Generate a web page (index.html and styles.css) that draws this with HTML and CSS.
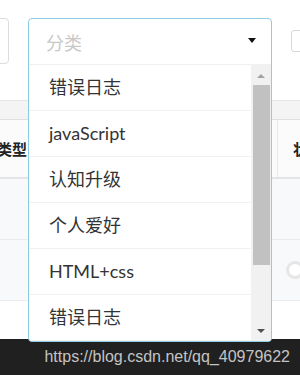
FILE: index.html
```html
<!DOCTYPE html>
<html lang="zh-CN">
<head>
  <meta charset="UTF-8" />
  <meta name="viewport" content="width=device-width, initial-scale=1" />
  <title>分类筛选</title>
  <link rel="stylesheet" href="styles.css">
</head>
<body>
  <div class="page">
    <!-- Filter bar -->
    <div class="filters">
      <div class="input"></div>
      <div class="select-wrap">
        <div class="select">
          <div class="select-head">
            <span class="placeholder">分类</span>
            <span class="caret"></span>
          </div>
          <div class="select-body">
            <ul class="options">
              <li>错误日志</li>
              <li>javaScript</li>
              <li>认知升级</li>
              <li>个人爱好</li>
              <li>HTML+css</li>
              <li>错误日志</li>
            </ul>
            <div class="scrollbar">
              <span class="arrow up"></span>
              <span class="thumb"></span>
              <span class="arrow down"></span>
            </div>
          </div>
        </div>
      </div>
      <div class="check"></div>
    </div>

    <!-- Table -->
    <div class="table">
      <div class="table-top"></div>
      <div class="thead">
        <div class="th first"><span>类型</span></div>
        <div class="th">状态</div>
      </div>
      <div class="row">
        <div class="td"></div>
        <div class="td"></div>
      </div>
      <div class="row">
        <div class="td"></div>
        <div class="td"><span class="radio"></span></div>
      </div>
    </div>

    <div class="watermark">https://blog.csdn.net/qq_40979622</div>
  </div>
</body>
</html>
```

FILE: styles.css
```css
body {
  margin: 0;
  padding: 0;
  background: #fff;
  font-family: Lato, "Noto Sans CJK SC", sans-serif;
  color: #333;
}

.page {
  height: 375px;
  display: flex;
  flex-direction: column;
  overflow: hidden;
}

/* filter bar */
.filters {
  display: flex;
  align-items: flex-start;
  gap: 19px;
  padding-top: 18px;
  height: 46px;
  margin-bottom: 36px;
}

.input {
  width: 120px;
  height: 44px;
  margin-left: -113px;
  border: 1px solid #dcdcdc;
  border-radius: 4px;
  flex-shrink: 0;
}

.select-wrap {
  position: relative;
  width: 244px;
  height: 46px;
  flex-shrink: 0;
  z-index: 5;
}

.select {
  position: absolute;
  top: 0;
  left: 0;
  width: 242px;
  height: 322px;
  border: 1px solid #8ccde4;
  border-radius: 4px;
  background: #fff;
  overflow: hidden;
}

.select-head {
  height: 45px;
  display: flex;
  align-items: center;
  justify-content: space-between;
  padding: 0 15px 0 17px;
  border-bottom: 1px solid #f0f0f0;
}

.placeholder {
  font-size: 18px;
  color: #c8c8c8;
}

.caret {
  width: 0;
  height: 0;
  margin-top: -3px;
  border-left: 4px solid transparent;
  border-right: 4px solid transparent;
  border-top: 5px solid #111;
}

.select-body {
  display: flex;
  height: 276px;
}

.options {
  list-style: none;
  margin: 0;
  padding: 0;
  flex: 1;
}

.options li {
  height: 45px;
  line-height: 45px;
  padding-left: 20px;
  font-size: 18px;
  color: #333;
  border-bottom: 1px solid #f2f2f2;
}

.scrollbar {
  width: 20px;
  background: #f1f1f1;
  display: flex;
  flex-direction: column;
  align-items: center;
}

.arrow {
  width: 0;
  height: 0;
  border-left: 4px solid transparent;
  border-right: 4px solid transparent;
}

.arrow.up {
  margin: 9px 0 7px;
  border-bottom: 4px solid #a3a3a3;
}

.arrow.down {
  margin-top: auto;
  margin-bottom: 8px;
  border-top: 4px solid #505050;
}

.thumb {
  width: 17px;
  height: 180px;
  margin-left: 1px;
  background: #c1c1c1;
}

.check {
  width: 20px;
  height: 20px;
  margin-top: 12px;
  border: 1px solid #d8d8d8;
  border-radius: 3px;
  flex-shrink: 0;
}

/* table */
.table {
  flex: 1;
  overflow: hidden;
}

.table-top {
  height: 18px;
  background: #f4f4f4;
  border-top: 1px solid #e6e6e6;
  border-bottom: 1px solid #e0e0e0;
}

.thead,
.row {
  display: grid;
  grid-template-columns: 278px 1fr;
}

.thead {
  height: 57px;
  background: #fbfbfc;
  border-bottom: 2px solid #e4e4e4;
}

.th {
  display: flex;
  align-items: center;
  font-family: "Noto Sans CJK SC", sans-serif;
  font-size: 15px;
  font-weight: bold;
  color: #222;
  padding-left: 15px;
  white-space: nowrap;
  overflow: hidden;
}

.th.first {
  padding-left: 0;
  border-right: 1px solid #e8e8e8;
}

.th.first span {
  margin-left: -3px;
}

.row {
  height: 60px;
  background: #f8f9fb;
  border-bottom: 1px solid #ececec;
}

.td {
  display: flex;
  align-items: center;
}

.radio {
  width: 12px;
  height: 12px;
  margin-left: 8px;
  border: 3px solid #e6e6e6;
  border-radius: 50%;
  background: #fff;
}

.watermark {
  height: 36px;
  flex-shrink: 0;
  background: #202020;
  color: #c4c4c4;
  font-family: "Liberation Sans", Arial, sans-serif;
  font-size: 16px;
  line-height: 36px;
  text-align: right;
  padding-right: 10px;
}
```
